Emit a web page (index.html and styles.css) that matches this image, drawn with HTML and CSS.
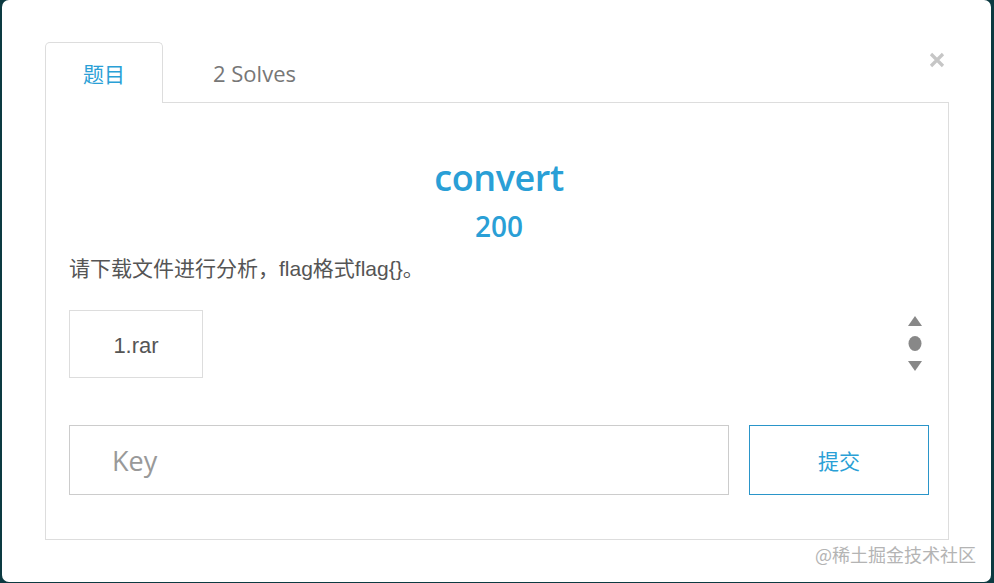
FILE: index.html
```html
<!DOCTYPE html>
<html lang="zh">
<head>
<meta charset="utf-8">
<title>convert</title>
<link rel="stylesheet" href="styles.css">
</head>
<body>
<div class="modal">
  <button class="close" aria-label="关闭">
    <svg width="16" height="16" viewBox="0 0 16 16"><path d="M2 2 L14 14 M14 2 L2 14" stroke="currentColor" stroke-width="3.2" stroke-linecap="butt"/></svg>
  </button>
  <div class="tabs">
    <div class="tab active">题目</div>
    <div class="tab">2 Solves</div>
  </div>
  <div class="panel">
    <h1 class="title">convert</h1>
    <div class="score">200</div>
    <p class="desc">请下载文件进行分析，flag格式flag{}。</p>
    <div class="files">
      <a class="file">1.rar</a>
      <svg class="spinner" width="16" height="56" viewBox="0 0 16 56"><path d="M8 0 L15 10 L1 10 Z" fill="#888"/><ellipse cx="8" cy="27.5" rx="6.5" ry="7.5" fill="#888"/><path d="M1 45 L15 45 L8 55 Z" fill="#888"/></svg>
    </div>
    <div class="submit-row">
      <div class="key">Key</div>
      <button class="submit">提交</button>
    </div>
  </div>
  <div class="watermark">@稀土掘金技术社区</div>
</div>
</body>
</html>
```
FILE: styles.css
```css
html, body {
  margin: 0;
  padding: 0;
}
body {
  background: #0c3a41;
  width: 994px;
  height: 583px;
  overflow: hidden;
  font-family: "Liberation Sans", "Noto Sans CJK SC", sans-serif;
}
.modal {
  position: relative;
  margin-left: 2px;
  width: 989px;
  height: 582px;
  box-sizing: border-box;
  background: #fff;
  border-radius: 7px;
  padding: 42px 42px 0 43px;
}
.close {
  position: absolute;
  top: 52px;
  left: 927px;
  padding: 0;
  border: 0;
  background: none;
  color: #c6c6c6;
  line-height: 0;
}
.tabs {
  display: flex;
  height: 60px;
  border-bottom: 1px solid #ddd;
}
.tab {
  height: 60px;
  box-sizing: border-box;
  padding: 0 38px;
  display: flex;
  align-items: center;
  font-family: "Open Sans", "Noto Sans CJK SC", sans-serif;
  font-size: 22px;
  color: #777;
  border: 1px solid transparent;
  border-bottom: 0;
}
.tab.active {
  height: 61px;
  margin-bottom: -1px;
  padding: 0 37px 0 37px;
  border-color: #ddd;
  border-radius: 5px 5px 0 0;
  background: #fff;
  color: #2a9fd6;
  font-family: "Noto Sans CJK SC", sans-serif;
  font-size: 21px;
}
.tab + .tab {
  margin-left: 11px;
}
.panel {
  height: 437px;
  box-sizing: border-box;
  border: 1px solid #ddd;
  border-top: 0;
  padding: 57px 19px 0 23px;
}
.title {
  margin: 0;
  text-align: center;
  font-family: "Open Sans", sans-serif;
  font-weight: 600;
  font-size: 36px;
  line-height: 36px;
  color: #2a9fd6;
  letter-spacing: -0.4px;
}
.score {
  margin-top: 16px;
  text-align: center;
  font-family: "Open Sans", sans-serif;
  font-weight: 600;
  font-size: 28px;
  line-height: 28px;
  color: #2a9fd6;
}
.desc {
  margin: 17px 0 0;
  font-size: 21px;
  line-height: 24px;
  color: #555;
}
.files {
  margin-top: 29px;
  display: flex;
  align-items: center;
  justify-content: space-between;
  padding-right: 6px;
}
.file {
  width: 134px;
  height: 68px;
  box-sizing: border-box;
  border: 1px solid #ddd;
  display: flex;
  align-items: center;
  justify-content: center;
  padding-top: 3px;
  font-size: 22px;
  color: #555;
}
.spinner {
  display: block;
}
.submit-row {
  margin-top: 47px;
  display: flex;
  gap: 20px;
}
.key {
  flex: 1;
  height: 70px;
  box-sizing: border-box;
  border: 1px solid #ccc;
  padding-left: 42px;
  display: flex;
  align-items: center;
  font-family: "Open Sans", sans-serif;
  font-size: 27px;
  color: #999;
}
.submit {
  width: 180px;
  height: 70px;
  box-sizing: border-box;
  border: 1px solid #2a95c9;
  background: #fff;
  color: #2a9fd6;
  font-family: "Noto Sans CJK SC", sans-serif;
  font-size: 21px;
  padding: 0;
}
.watermark {
  position: absolute;
  left: 813px;
  top: 542px;
  font-family: "Noto Sans CJK SC", sans-serif;
  font-size: 18px;
  line-height: 24px;
  color: #b4b4b4;
}
```
